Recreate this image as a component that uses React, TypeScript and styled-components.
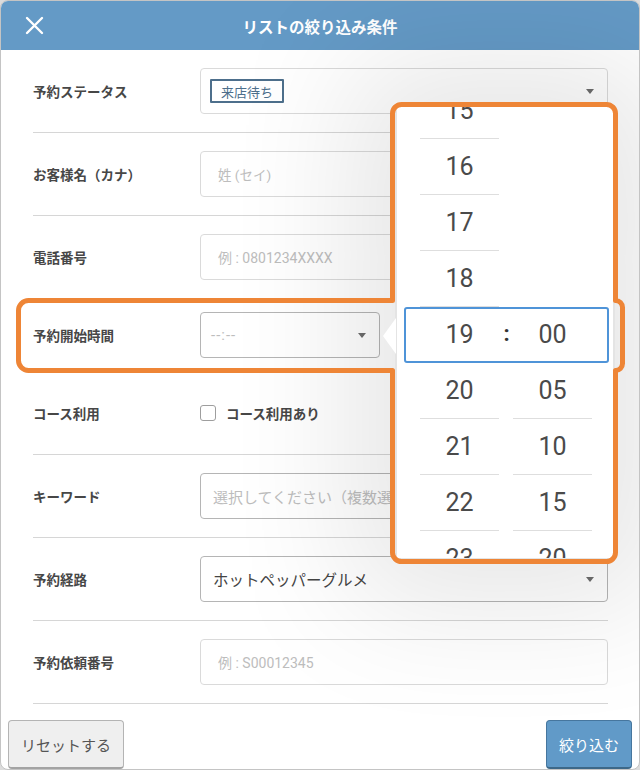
import React from 'react'
import styled, { createGlobalStyle } from 'styled-components'

const GlobalStyle = createGlobalStyle`
  html, body {
    margin: 0;
    padding: 0;
    background: #dcdcdc;
  }
  body {
    font-family: Roboto, "Noto Sans CJK JP", sans-serif;
    color: #444;
  }
`

const Dialog = styled.div`
  position: relative;
  box-sizing: border-box;
  width: 640px;
  height: 770px;
  display: flex;
  flex-direction: column;
  background: #fff;
  border: 1px solid #c4c4c4;
  border-radius: 8px;
  overflow: hidden;
`

const Header = styled.header`
  flex: none;
  height: 49px;
  display: grid;
  grid-template-columns: 60px 1fr 60px;
  align-items: center;
  background: #649ac6;
`

const CloseButton = styled.button`
  justify-self: start;
  margin-left: 22px;
  padding: 0;
  width: 22px;
  height: 22px;
  display: flex;
  align-items: center;
  justify-content: center;
  background: none;
  border: none;
`

const Title = styled.h1`
  margin: 0;
  text-align: center;
  color: #fff;
  font-family: "Noto Sans CJK JP", sans-serif;
  font-size: 15.5px;
  font-weight: 700;
`

const Body = styled.div`
  flex: 1;
  padding: 0 31px 0 32px;
`

const Row = styled.div<{ $compact?: boolean }>`
  display: grid;
  grid-template-columns: 167px 1fr;
  align-items: center;
  height: ${p => (p.$compact ? 73 : 83)}px;
  box-sizing: border-box;
  border-bottom: 1px solid #d6d6d6;
`

const Label = styled.div`
  font-family: "Noto Sans CJK JP", sans-serif;
  font-size: 13.5px;
  font-weight: 600;
  color: #474747;
`

const Field = styled.div<{ $dark?: boolean; $width?: number; $pad?: number }>`
  box-sizing: border-box;
  width: ${p => (p.$width ? `${p.$width}px` : 'auto')};
  height: 46px;
  display: flex;
  align-items: center;
  justify-content: space-between;
  padding: 0 13px 0 ${p => p.$pad ?? 17}px;
  border: 1px solid ${p => (p.$dark ? '#b5b5b5' : '#dadada')};
  border-radius: 4px;
  background: #fff;
  overflow: hidden;
  white-space: nowrap;
`

const Placeholder = styled.span<{ $size?: number; $spacing?: number }>`
  font-size: ${p => p.$size ?? 14}px;
  letter-spacing: ${p => p.$spacing ?? 0}px;
  color: #bdbdbd;
`

const Value = styled.span`
  font-size: 15.5px;
  color: #444;
`

const Arrow = styled.span`
  flex: none;
  width: 0;
  height: 0;
  border-left: 4.5px solid transparent;
  border-right: 4.5px solid transparent;
  border-top: 5px solid #6d6d6d;
`

const Tag = styled.span`
  box-sizing: border-box;
  margin-left: -8px;
  height: 24px;
  display: inline-flex;
  align-items: center;
  padding: 0 9px;
  border: 2px solid #4d6f8c;
  border-radius: 1px;
  font-size: 13px;
  color: #4d6f8c;
`

const CheckRow = styled.label`
  display: flex;
  align-items: center;
  gap: 10px;
  font-family: "Noto Sans CJK JP", sans-serif;
  font-size: 13.5px;
  font-weight: 600;
  color: #474747;
`

const CheckBox = styled.span`
  box-sizing: border-box;
  width: 16px;
  height: 16px;
  border: 1px solid #9e9e9e;
  border-radius: 3px;
  background: #fff;
`

const Footer = styled.footer`
  flex: none;
  display: flex;
  justify-content: space-between;
  align-items: flex-start;
  padding: 10px 7px 0 7px;
`

const Button = styled.button<{ $primary?: boolean }>`
  box-sizing: border-box;
  height: 49px;
  padding: 0 12px;
  font-family: "Noto Sans CJK JP", sans-serif;
  font-size: 15px;
  border-radius: 4px;
  color: ${p => (p.$primary ? '#fff' : '#555')};
  background: ${p => (p.$primary ? '#619ac8' : '#efefef')};
  border: 1px solid ${p => (p.$primary ? '#46769e' : '#b4b4b4')};
  border-bottom: 2px solid ${p => (p.$primary ? '#3d6888' : '#a3a3a3')};
`

const Popover = styled.div`
  position: absolute;
  left: 394px;
  top: 104px;
  box-sizing: border-box;
  width: 220px;
  height: 455px;
  border: 2px solid #e4e4e4;
  background: #fff;
  box-shadow: 0 0 130px 45px rgba(0, 0, 0, 0.1);
  z-index: 2;

  &::before {
    content: '';
    position: absolute;
    left: -14px;
    top: 211px;
    border-right: 13px solid #fff;
    border-top: 18px solid transparent;
    border-bottom: 18px solid transparent;
  }
`

const Wheel = styled.div`
  position: relative;
  height: 100%;
  overflow: hidden;
  display: grid;
  grid-template-columns: 79px 79px;
  column-gap: 14px;
  align-items: start;
  padding-left: 23px;
`

const Column = styled.div<{ $offset: number }>`
  margin-top: ${p => p.$offset}px;
`

const Item = styled.div<{ $selected?: boolean }>`
  box-sizing: border-box;
  height: 56px;
  display: flex;
  align-items: center;
  justify-content: center;
  border-bottom: 1px solid ${p => (p.$selected ? 'transparent' : '#dedede')};
  font-family: Roboto, sans-serif;
  font-size: 25px;
  color: #4a4a4a;
`

const Selection = styled.div`
  position: absolute;
  left: 7px;
  top: 200px;
  box-sizing: border-box;
  width: 205px;
  height: 56px;
  border: 2px solid #4f94d8;
  border-radius: 3px;
  display: flex;
  align-items: center;
  justify-content: center;
  font-family: Roboto, sans-serif;
  font-size: 22px;
  font-weight: 700;
  color: #333;
  padding-bottom: 3px;
`

const Highlight = styled.svg`
  position: absolute;
  left: -1px;
  top: -1px;
  width: 640px;
  height: 770px;
  pointer-events: none;
  z-index: 3;
`

const hours = ['15', '16', '17', '18', '19', '20', '21', '22', '23']
const minutes = ['00', '05', '10', '15', '20']

const highlightPath =
  'M 401.5 104.5 H 606.5 A 9 9 0 0 1 615.5 113.5 V 300.5 A 7 7 0 0 1 622.5 307.5 V 363.5 ' +
  'A 7 7 0 0 1 615.5 370.5 V 552.5 A 9 9 0 0 1 606.5 561.5 H 401.5 A 9 9 0 0 1 392.5 552.5 ' +
  'V 370.5 H 28.5 A 10 10 0 0 1 18.5 360.5 V 310.5 A 10 10 0 0 1 28.5 300.5 H 392.5 ' +
  'V 113.5 A 9 9 0 0 1 401.5 104.5 Z'

export default function App() {
  return (
    <>
      <GlobalStyle />
      <Dialog>
        <Header>
          <CloseButton aria-label="閉じる">
            <svg width="19" height="19" viewBox="0 0 19 19">
              <path d="M2 2 L17 17 M17 2 L2 17" stroke="#fff" strokeWidth="2.4" strokeLinecap="round" />
            </svg>
          </CloseButton>
          <Title>リストの絞り込み条件</Title>
          <span />
        </Header>

        <Body>
          <Row>
            <Label>予約ステータス</Label>
            <Field>
              <Tag>来店待ち</Tag>
              <Arrow />
            </Field>
          </Row>
          <Row>
            <Label>お客様名（カナ）</Label>
            <Field>
              <Placeholder $size={13.5}>姓 (セイ)</Placeholder>
            </Field>
          </Row>
          <Row>
            <Label>電話番号</Label>
            <Field>
              <Placeholder>例 : 0801234XXXX</Placeholder>
            </Field>
          </Row>
          <Row $compact>
            <Label>予約開始時間</Label>
            <Field $dark $width={180} $pad={10}>
              <Placeholder $size={15} $spacing={1}>--:--</Placeholder>
              <Arrow />
            </Field>
          </Row>
          <Row>
            <Label>コース利用</Label>
            <CheckRow>
              <CheckBox />
              コース利用あり
            </CheckRow>
          </Row>
          <Row>
            <Label>キーワード</Label>
            <Field $dark $pad={12}>
              <Placeholder $size={15}>選択してください（複数選択可）</Placeholder>
            </Field>
          </Row>
          <Row>
            <Label>予約経路</Label>
            <Field $dark $pad={12}>
              <Value>ホットペッパーグルメ</Value>
              <Arrow />
            </Field>
          </Row>
          <Row>
            <Label>予約依頼番号</Label>
            <Field>
              <Placeholder>例 : S00012345</Placeholder>
            </Field>
          </Row>
        </Body>

        <Footer>
          <Button>リセットする</Button>
          <Button $primary>絞り込む</Button>
        </Footer>

        <Popover>
          <Wheel>
            <Column $offset={-24}>
              {hours.map(h => (
                <Item key={h} $selected={h === '19'}>{h}</Item>
              ))}
            </Column>
            <Column $offset={200}>
              {minutes.map(m => (
                <Item key={m} $selected={m === '00'}>{m}</Item>
              ))}
            </Column>
            <Selection>:</Selection>
          </Wheel>
        </Popover>

        <Highlight viewBox="0 0 640 770">
          <path d={highlightPath} fill="none" stroke="#ee8536" strokeWidth="5" strokeLinejoin="round" />
        </Highlight>
      </Dialog>
    </>
  )
}
